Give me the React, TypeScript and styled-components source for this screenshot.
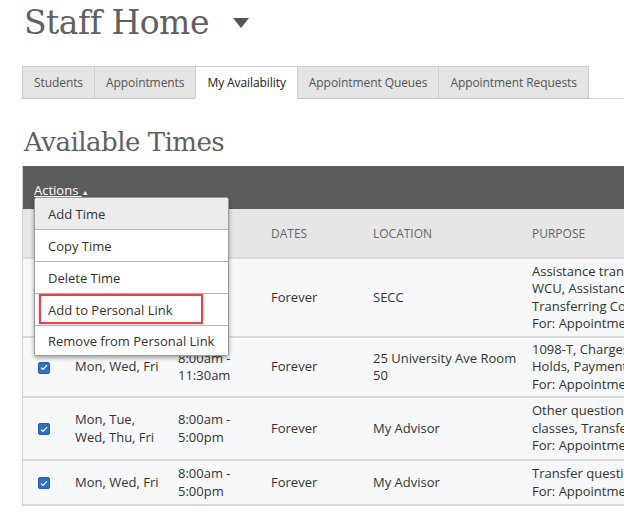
import styled, { createGlobalStyle } from "styled-components";

const GlobalStyle = createGlobalStyle`
	body {
		margin: 0;
		background: #fff;
		font-family: "Open Sans", "Noto Sans", sans-serif;
		overflow: hidden;
	}
`;

const tabs = ["Students", "Appointments", "My Availability", "Appointment Queues", "Appointment Requests"];

const menuItems = ["Add Time", "Copy Time", "Delete Time", "Add to Personal Link", "Remove from Personal Link"];

interface Row {
	days: string[];
	times: string[];
	dates: string;
	location: string[];
	purpose: string[];
	height: number;
}

const rows: Row[] = [
	{
		days: ["Mon, Tue, Wed"],
		times: ["8:00am", "5:00pm"],
		dates: "Forever",
		location: ["SECC"],
		purpose: ["Assistance transferring to", "WCU, Assistance with", "Transferring Courses", "For: Appointments"],
		height: 79,
	},
	{
		days: ["Mon, Wed, Fri"],
		times: ["8:00am -", "11:30am"],
		dates: "Forever",
		location: ["25 University Ave Room", "50"],
		purpose: ["1098-T, Charges on Account,", "Holds, Payment Plans", "For: Appointments"],
		height: 60,
	},
	{
		days: ["Mon, Tue,", "Wed, Thu, Fri"],
		times: ["8:00am -", "5:00pm"],
		dates: "Forever",
		location: ["My Advisor"],
		purpose: ["Other questions about", "classes, Transfer Credit", "For: Appointments"],
		height: 63,
	},
	{
		days: ["Mon, Wed, Fri"],
		times: ["8:00am -", "5:00pm"],
		dates: "Forever",
		location: ["My Advisor"],
		purpose: ["Transfer questions", "For: Appointments"],
		height: 45,
	},
];

function Check() {
	return (
		<CheckBox>
			<svg width="8" height="7" viewBox="0 0 8 7">
				<path d="M1 3.6 L3 5.5 L7 1.2" fill="none" stroke="#fff" strokeWidth="1.2" />
			</svg>
		</CheckBox>
	);
}

function Lines({ items }: { items: string[] }) {
	return (
		<>
			{items.map((t) => (
				<Line key={t}>{t}</Line>
			))}
		</>
	);
}

function App() {
	return (
		<Page>
			<GlobalStyle />
			<Title>
				Staff Home
				<Caret />
			</Title>
			<TabBar>
				{tabs.map((t) => (
					<Tab key={t} active={t === "My Availability"}>
						{t}
					</Tab>
				))}
			</TabBar>
			<SubTitle>Available Times</SubTitle>
			<Panel>
				<ActionBar>
					<ActionLink>
						Actions <small>▲</small>
					</ActionLink>
					<Menu>
						{menuItems.map((m, i) => (
							<MenuItem key={m} first={i === 0}>
								{m}
								{m === "Add to Personal Link" && <Highlight />}
							</MenuItem>
						))}
					</Menu>
				</ActionBar>
				<Table>
					<colgroup>
						<col style={{ width: 40 }} />
						<col style={{ width: 103 }} />
						<col style={{ width: 93 }} />
						<col style={{ width: 102 }} />
						<col style={{ width: 159 }} />
						<col style={{ width: 220 }} />
					</colgroup>
					<thead>
						<tr>
							<Th />
							<Th>Days</Th>
							<Th>Times</Th>
							<Th>Dates</Th>
							<Th>Location</Th>
							<Th>Purpose</Th>
						</tr>
					</thead>
					<tbody>
						{rows.map((r, i) => (
							<Tr key={i} h={r.height}>
								<Td>
									<Check />
								</Td>
								<Td>
									<Lines items={r.days} />
								</Td>
								<Td>
									<Lines items={r.times} />
								</Td>
								<Td>{r.dates}</Td>
								<Td>
									<Lines items={r.location} />
								</Td>
								<Td>
									<Lines items={r.purpose} />
								</Td>
							</Tr>
						))}
					</tbody>
				</Table>
			</Panel>
		</Page>
	);
}

const Page = styled.div`
	padding: 0 0 0 22px;
	width: 760px;
`;

const Title = styled.h1`
	margin: 0;
	padding: 3px 0 0 2px;
	height: 66px;
	box-sizing: border-box;
	font-family: "DejaVu Serif", serif;
	font-weight: normal;
	font-size: 33px;
	line-height: 40px;
	color: #606060;
	display: flex;
	align-items: flex-start;
	letter-spacing: -0.5px;
`;

const Caret = styled.span`
	display: inline-block;
	width: 0;
	height: 0;
	margin: 15px 0 0 24px;
	border-left: 8px solid transparent;
	border-right: 8px solid transparent;
	border-top: 10px solid #555;
`;

const TabBar = styled.div`
	display: flex;
	border-bottom: 1px solid #d8d8d8;
	height: 32px;
`;

const Tab = styled.div<{ active?: boolean }>`
	display: flex;
	align-items: center;
	padding: 0 11px;
	height: 33px;
	box-sizing: border-box;
	border: 1px solid #cfcfcf;
	margin-left: -1px;
	background: ${({ active }) => (active ? "#fff" : "#e4e4e4")};
	color: ${({ active }) => (active ? "#222" : "#555")};
	border-bottom: ${({ active }) => (active ? "1px solid #fff" : "1px solid #c4c4c4")};
	font-size: 12px;
	letter-spacing: -0.08px;
	&:first-child {
		margin-left: 0;
	}
`;

const SubTitle = styled.h2`
	margin: 0;
	padding: 26px 0 0 2px;
	height: 67px;
	box-sizing: border-box;
	font-family: "DejaVu Serif", serif;
	font-weight: normal;
	font-size: 26px;
	line-height: 34px;
	color: #606060;
	letter-spacing: -0.5px;
`;

const Panel = styled.div`
	border-left: 1px solid #d0d0d0;
`;

const ActionBar = styled.div`
	position: relative;
	height: 43px;
	background: #5c5c5c;
	padding: 12px 0 0 11px;
	box-sizing: border-box;
`;

const ActionLink = styled.span`
	color: #fff;
	font-size: 13px;
	text-decoration: underline;
	small {
		font-size: 7px;
		text-decoration: none;
		display: inline-block;
	}
`;

const Menu = styled.div`
	position: absolute;
	top: 31px;
	left: 11px;
	width: 193px;
	background: #fff;
	border: 1px solid #9a9a9a;
	border-radius: 3px;
	box-shadow: 0 2px 4px rgba(0, 0, 0, 0.35);
	z-index: 5;
	overflow: hidden;
`;

const MenuItem = styled.div<{ first?: boolean }>`
	position: relative;
	height: 32px;
	box-sizing: border-box;
	display: flex;
	align-items: center;
	padding-left: 13px;
	font-size: 13px;
	color: #333;
	background: ${({ first }) => (first ? "#ececec" : "#fff")};
	border-bottom: 1px solid #b8b8b8;
	&:last-child {
		border-bottom: none;
		height: 29px;
	}
`;

const Highlight = styled.span`
	position: absolute;
	left: 4px;
	top: 0;
	width: 164px;
	height: 30px;
	box-sizing: border-box;
	border: 2px solid #e0474c;
	box-shadow: 0 0 2px rgba(224, 71, 76, 0.5);
`;

const Table = styled.table`
	border-collapse: collapse;
	table-layout: fixed;
	width: 717px;
	font-size: 13px;
	color: #333;
`;

const Th = styled.th`
	height: 48px;
	background: #e6e6e6;
	text-align: left;
	font-weight: normal;
	text-transform: uppercase;
	font-size: 12px;
	color: #666;
	padding: 0 12px;
	border-bottom: 2px solid #dcdcdc;
`;

const Tr = styled.tr<{ h: number }>`
	height: ${({ h }) => h}px;
	background: #f7f8fa;
	border-bottom: 2px solid #dadada;
`;

const Td = styled.td`
	padding: 0 0 0 12px;
	vertical-align: middle;
	line-height: 17.5px;
	&:first-child {
		padding-left: 15px;
	}
`;

const Line = styled.div`
	white-space: nowrap;
`;

const CheckBox = styled.span`
	display: inline-flex;
	align-items: center;
	justify-content: center;
	width: 12px;
	height: 12px;
	background: #2f6fc4;
	border: 1px solid #2a5fa8;
	border-radius: 2px;
	box-sizing: border-box;
	vertical-align: middle;
`;

export default App;
